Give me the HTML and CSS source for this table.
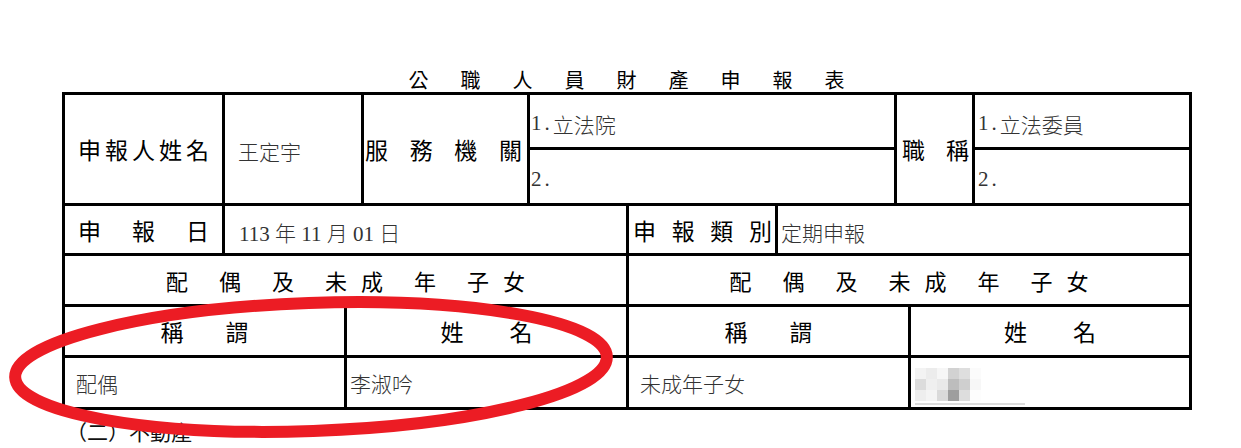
FILE: index.html
```html
<!DOCTYPE html>
<html lang="zh-Hant">
<head>
<meta charset="utf-8">
<title>公職人員財產申報表</title>
<link rel="stylesheet" href="styles.css">
</head>
<body>
<div class="page">
  <h1 class="title">公職人員財產申報表</h1>
  <div class="form">
    <div class="cell lbl just a-name"><span>申</span><span>報</span><span>人</span><span>姓</span><span>名</span></div>
    <div class="cell val a-nameval">王定宇</div>
    <div class="cell lbl just a-org"><span>服</span><span>務</span><span>機</span><span>關</span></div>
    <div class="cell val low a-org1"><span class="num">1.</span>立法院</div>
    <div class="cell val low a-org2"><span class="num">2.</span></div>
    <div class="cell lbl just a-pos"><span>職</span><span>稱</span></div>
    <div class="cell val low a-pos1"><span class="num">1.</span>立法委員</div>
    <div class="cell val low a-pos2"><span class="num">2.</span></div>

    <div class="cell lbl just a-date"><span>申</span><span>報</span><span>日</span></div>
    <div class="cell val low a-dateval">113 年 11 月 01 日</div>
    <div class="cell lbl just a-type"><span>申</span><span>報</span><span>類</span><span>別</span></div>
    <div class="cell val low a-typeval">定期申報</div>

    <div class="cell lbl center fam a-faml"><span class="w">配</span><span class="w">偶</span><span class="w">及</span><span class="n">未</span><span class="w">成</span><span class="w">年</span><span class="n">子</span><span>女</span></div>
    <div class="cell lbl center fam a-famr"><span class="w">配</span><span class="w">偶</span><span class="w">及</span><span class="n">未</span><span class="w">成</span><span class="w">年</span><span class="n">子</span><span>女</span></div>

    <div class="cell lbl center pair a-h1"><span>稱</span><span>謂</span></div>
    <div class="cell lbl center pair wide a-h2"><span>姓</span><span>名</span></div>
    <div class="cell lbl center pair a-h3"><span>稱</span><span>謂</span></div>
    <div class="cell lbl center pair wide a-h4"><span>姓</span><span>名</span></div>

    <div class="cell val a-d1">配偶</div>
    <div class="cell val a-d2">李淑吟</div>
    <div class="cell val a-d3">未成年子女</div>
    <div class="cell blur a-d4">
      <div class="mosaic"><i></i><i></i><i></i><i></i><i></i><i></i><i></i><i></i><i></i><i></i><i></i><i></i><i></i><i></i><i></i><i></i><i></i><i></i></div>
      <div class="smear"></div>
    </div>
  </div>
  <p class="section">（二）不動產</p>
  <svg class="mark" width="1241" height="448" viewBox="0 0 1241 448" aria-hidden="true">
    <ellipse cx="311" cy="367" rx="296" ry="64" transform="rotate(-2 311 367)" fill="none" stroke="#ec1c24" stroke-width="12"/>
  </svg>
</div>
</body>
</html>
```

FILE: styles.css
```css
html, body {
  margin: 0;
  padding: 0;
  background: #fff;
}

.page {
  position: relative;
  width: 1241px;
  height: 448px;
  overflow: hidden;
  font-family: "Noto Sans CJK TC", "Noto Sans CJK SC", sans-serif;
  color: #000;
}

.title {
  margin: 0 0 0 62px;
  padding: 67px 0 0 31px;
  width: 1130px;
  box-sizing: border-box;
  height: 92px;
  line-height: 25px;
  font-size: 20px;
  font-weight: 400;
  letter-spacing: 32px;
  text-align: center;
}

.form {
  margin-left: 62px;
  width: 1130px;
  box-sizing: border-box;
  display: grid;
  grid-template-columns: 157px 119px 14px 163px 96px 146px 116px 11px 61px 214px;
  grid-template-rows: 52px 53px 47px 48px 48px 49px;
  gap: 3px;
  padding: 3px;
  background: #000;
}

.cell {
  background: #fff;
  display: flex;
  align-items: center;
  min-width: 0;
  white-space: nowrap;
}

.lbl {
  font-size: 23px;
  color: #000;
}

.just {
  justify-content: space-between;
  padding: 0 13px;
}

.center {
  justify-content: center;
}

.val {
  font-family: "Liberation Serif", "Noto Sans CJK TC", serif;
  font-size: 21px;
  color: #333;
  font-weight: 300;
}

.low {
  padding-top: 5px;
}

.a-nameval { padding-top: 4px; }

.num {
  letter-spacing: 3px;
}

.fam {
  font-size: 22px;
}
.fam .w { margin-right: 31px; }
.fam .n { margin-right: 14px; }

.pair { gap: 42px; }
.pair.wide { gap: 46px; }

/* grid areas */
.a-name { grid-column: 1; grid-row: 1 / 3; }
.a-nameval { grid-column: 2 / 4; grid-row: 1 / 3; padding-left: 13px; }
.a-org { grid-column: 4; grid-row: 1 / 3; padding: 0 5px 0 1px; }
.a-org1 { grid-column: 5 / 8; grid-row: 1; padding-left: 1px; }
.a-org2 { grid-column: 5 / 8; grid-row: 2; padding-left: 1px; }
.a-pos { grid-column: 8 / 10; grid-row: 1 / 3; padding: 0 3px 0 5px; }
.a-pos1 { grid-column: 10; grid-row: 1; padding-left: 3px; }
.a-pos2 { grid-column: 10; grid-row: 2; padding-left: 3px; }

.a-date { grid-column: 1; grid-row: 3; }
.a-dateval { grid-column: 2 / 6; grid-row: 3; padding-left: 14px; }
.a-type { grid-column: 6; grid-row: 3; padding: 0 3px 0 4px; }
.a-typeval { grid-column: 7 / 11; grid-row: 3; padding-left: 3px; }

.a-faml { grid-column: 1 / 6; grid-row: 4; }
.a-famr { grid-column: 6 / 11; grid-row: 4; }

.a-h1 { grid-column: 1 / 3; grid-row: 5; }
.a-h2 { grid-column: 3 / 6; grid-row: 5; }
.a-h3 { grid-column: 6 / 9; grid-row: 5; }
.a-h4 { grid-column: 9 / 11; grid-row: 5; }

.a-d1 { grid-column: 1 / 3; grid-row: 6; padding-left: 11px; }
.a-d2 { grid-column: 3 / 6; grid-row: 6; padding-left: 3px; }
.a-d3 { grid-column: 6 / 9; grid-row: 6; padding-left: 11px; }
.a-d4 { grid-column: 9 / 11; grid-row: 6; }

.blur {
  flex-direction: column;
  align-items: flex-start;
  padding: 10px 0 2px 4px;
}

.mosaic {
  display: grid;
  grid-template-columns: repeat(6, 11px);
  grid-template-rows: repeat(3, 11px);
}
.mosaic i { display: block; background: #f4f4f4; }
.mosaic i:nth-child(1) { background: #f3f3f3; }
.mosaic i:nth-child(2) { background: #ececec; }
.mosaic i:nth-child(3) { background: #f6f6f6; }
.mosaic i:nth-child(4) { background: #d2d2d2; }
.mosaic i:nth-child(5) { background: #dedede; }
.mosaic i:nth-child(6) { background: #fbfbfb; }
.mosaic i:nth-child(7) { background: #dcdcdc; }
.mosaic i:nth-child(8) { background: #efefef; }
.mosaic i:nth-child(9) { background: #e9e9e9; }
.mosaic i:nth-child(10) { background: #bdbdbd; }
.mosaic i:nth-child(11) { background: #cfcfcf; }
.mosaic i:nth-child(12) { background: #f7f7f7; }
.mosaic i:nth-child(13) { background: #eeeeee; }
.mosaic i:nth-child(14) { background: #f4f4f4; }
.mosaic i:nth-child(15) { background: #dadada; }
.mosaic i:nth-child(16) { background: #9e9e9e; }
.mosaic i:nth-child(17) { background: #dddddd; }
.mosaic i:nth-child(18) { background: #fdfdfd; }

.smear {
  margin-top: auto;
  width: 110px;
  height: 2px;
  background: #dcdcdc;
}

.section {
  margin: 9px 0 0 66px;
  font-size: 21px;
  line-height: 24px;
  color: #111;
}

.mark {
  position: absolute;
  left: 0;
  top: 0;
  pointer-events: none;
}
```
